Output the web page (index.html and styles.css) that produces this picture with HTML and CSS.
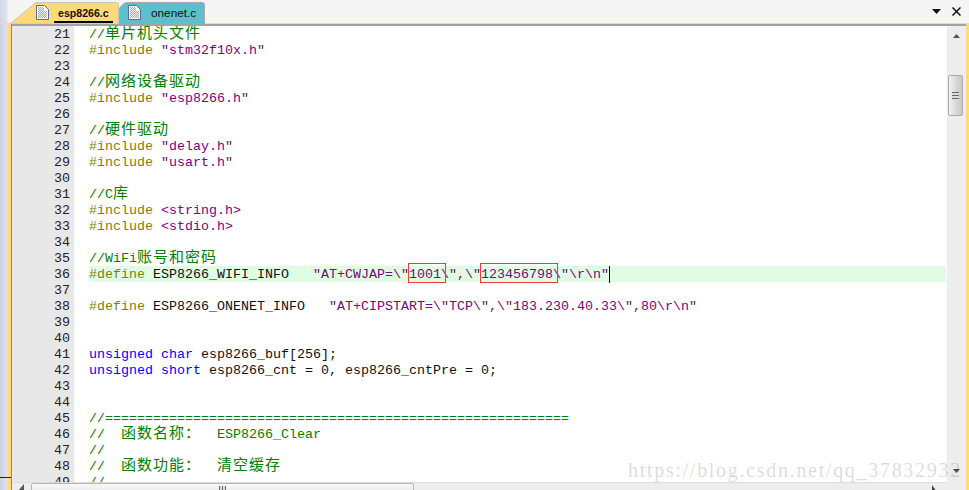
FILE: index.html
```html
<!DOCTYPE html>
<html lang="zh">
<head>
<meta charset="utf-8">
<title>esp8266.c</title>
<link rel="stylesheet" href="styles.css">
</head>
<body>
<div class="window">
  <div class="tabbar">
    <svg class="tabshapes" width="969" height="24" viewBox="0 0 969 24">
      <path d="M118.500 24 L118.500 4.500 Q118.500 2.500 116 2.500 L36 2.500 L10 24 Z" fill="#ffd97a" stroke="#c4c4c4"/>
      <path d="M119.500 24 L119.500 9 Q119.500 7 124 3.500 Q125 2.500 128 2.500 L202 2.500 Q204.500 2.500 204.500 5 L204.500 24 Z" fill="#5cc0cc" stroke="#a8a8a8"/>
    </svg>
    <div class="tab tab-active">
      <svg class="fileicon" width="13" height="15" viewBox="0 0 13 15"><defs><pattern id="dither" width="2" height="2" patternUnits="userSpaceOnUse"><rect width="2" height="2" fill="#f0f0f0"/><rect width="1" height="1" fill="#a8a8a8"/><rect x="1" y="1" width="1" height="1" fill="#a8a8a8"/></pattern></defs><path d="M.5.500H8.500L12.500 4.500V14.500H.5Z" fill="#fff" stroke="#4f6f9c"/><path d="M2 2H8V6H11V13H2Z" fill="url(#dither)"/></svg>
      <span class="tablabel">esp8266.c</span>
    </div>
    <div class="tab tab-other">
      <svg class="fileicon" width="13" height="15" viewBox="0 0 13 15"><path d="M.5.500H8.500L12.500 4.500V14.500H.5Z" fill="#fff" stroke="#4f6f9c"/><path d="M2 2H8V6H11V13H2Z" fill="url(#dither)"/></svg>
      <span class="tablabel">onenet.c</span>
    </div>
    <div class="tabtools">
      <svg width="9" height="5" viewBox="0 0 9 5"><path d="M0 0H9L4.500 5Z" fill="#111"/></svg>
      <svg width="9" height="9" viewBox="0 0 9 9"><path d="M.5.500L8.500 8.500M8.500.500L.5 8.500" stroke="#111" stroke-width="1.500"/></svg>
    </div>
  </div>
  <div class="body">
    <div class="leftstrip"></div>
    <div class="editor">
      <div class="viewport">
        <div class="gutter">
          <span>21</span><span>22</span><span>23</span><span>24</span><span>25</span><span>26</span><span>27</span><span>28</span><span>29</span><span>30</span><span>31</span><span>32</span><span>33</span><span>34</span><span>35</span><span>36</span><span>37</span><span>38</span><span>39</span><span>40</span><span>41</span><span>42</span><span>43</span><span>44</span><span>45</span><span>46</span><span>47</span><span>48</span><span>49</span>
        </div>
        <div class="hatch"></div>
        <div class="code">
          <div class="line c">//<span class="cjk">单片机头文件</span></div>
          <div class="line"><span class="p">#include</span> <span class="s">"stm32f10x.h"</span></div>
          <div class="line"></div>
          <div class="line c">//<span class="cjk">网络设备驱动</span></div>
          <div class="line"><span class="p">#include</span> <span class="s">"esp8266.h"</span></div>
          <div class="line"></div>
          <div class="line c">//<span class="cjk">硬件驱动</span></div>
          <div class="line"><span class="p">#include</span> <span class="s">"delay.h"</span></div>
          <div class="line"><span class="p">#include</span> <span class="s">"usart.h"</span></div>
          <div class="line"></div>
          <div class="line c">//C<span class="cjk">库</span></div>
          <div class="line"><span class="p">#include</span> <span class="s">&lt;string.h&gt;</span></div>
          <div class="line"><span class="p">#include</span> <span class="s">&lt;stdio.h&gt;</span></div>
          <div class="line"></div>
          <div class="line c">//WiFi<span class="cjk">账号和密码</span></div>
          <div class="line current"><span class="p">#define</span> ESP8266_WIFI_INFO   <span class="s">"AT+CWJAP=\"1001\",\"123456798\"\r\n"</span><span class="caret"></span><span class="mark mark-ssid"></span><span class="mark mark-pass"></span></div>
          <div class="line"></div>
          <div class="line"><span class="p">#define</span> ESP8266_ONENET_INFO   <span class="s">"AT+CIPSTART=\"TCP\",\"183.230.40.33\",80\r\n"</span></div>
          <div class="line"></div>
          <div class="line"></div>
          <div class="line"><span class="k">unsigned</span> <span class="k">char</span> esp8266_buf[256];</div>
          <div class="line"><span class="k">unsigned</span> <span class="k">short</span> esp8266_cnt = 0, esp8266_cntPre = 0;</div>
          <div class="line"></div>
          <div class="line"></div>
          <div class="line c">//==========================================================</div>
          <div class="line c">//  <span class="cjk">函数名称：</span>  ESP8266_Clear</div>
          <div class="line c">//</div>
          <div class="line c">//  <span class="cjk">函数功能：</span>  <span class="cjk">清空缓存</span></div>
          <div class="line c">//</div>
        </div>
      </div>
      <div class="hscroll">
        <svg class="arrow" width="6" height="7" viewBox="0 0 6 7"><path d="M6 0V7H0Z" fill="#555"/></svg>
        <div class="hthumb"><span class="grip"></span></div>
        <svg class="arrow-right" width="5" height="7" viewBox="0 0 5 7"><path d="M0 0L5 7H0Z" fill="#444"/></svg>
      </div>
    </div>
    <div class="vscroll">
      <svg width="7" height="4" viewBox="0 0 7 4"><path d="M3.500 0L7 4H0Z" fill="#555"/></svg>
      <div class="vthumb"><span class="vgrip"></span></div>
      <svg class="downarrow" width="7" height="4" viewBox="0 0 7 4"><path d="M3.500 4L7 0H0Z" fill="#444"/></svg>
    </div>
    <div class="rightedge"></div>
  </div>
  <div class="watermark">https://blog.csdn.net/qq_37832932</div>
</div>
</body>
</html>
```
FILE: styles.css
```css
* { box-sizing: border-box; }
html, body { margin: 0; padding: 0; }
body { width: 969px; height: 490px; overflow: hidden; background: #fff; }
.window { position: relative; width: 969px; height: 490px; display: flex; flex-direction: column; overflow: hidden; }

.tabbar { position: relative; height: 24px; flex: none; background: linear-gradient(to right, #d3d7e6 0, #dfe3ee 7px, #f5f5f5 8px); display: flex; align-items: stretch; padding-left: 36px; border-bottom: 1px solid #ffd97a; }
.tabshapes { position: absolute; left: 0; top: 0; }
.tab { position: relative; display: flex; align-items: center; color: #111; padding-top: 2px; }
.tab-active { width: 83px; }
.tab-other { width: 85px; padding-left: 9px; }
.fileicon { flex: none; }
.tablabel { font-family: "Liberation Sans", Arial, sans-serif; }
.tab-active .tablabel { font-size: 10.6px; font-weight: 700; line-height: 16px; margin-left: 5px; padding: 1px 4px 0; border-bottom: 2px solid #000; margin-top: 1px; }
.tab-other .tablabel { font-size: 11.8px; line-height: 20px; margin-left: 10px; }
.tabtools { position: relative; margin-left: auto; display: flex; align-items: center; gap: 11px; padding-right: 8px; }

.body { flex: 1; min-height: 0; display: flex; }
.leftstrip { width: 11px; flex: none; background: linear-gradient(to bottom, transparent 453px, #222 453px, #222 454px, transparent 454px), linear-gradient(to right, #c9cfe0 0, #dfe3ee 7px, #ffd97a 8px, #ffd97a 11px); }
.editor { width: 936px; flex: none; display: flex; flex-direction: column; border-top: 2px solid #a3a3a3; border-left: 1px solid #888; min-height: 0; }
.viewport { flex: 1; min-height: 0; display: flex; overflow: hidden; background: #fff; }
.gutter { width: 62px; flex: none; background: #e8e8e8; display: flex; flex-direction: column; align-items: flex-end; padding-right: 4px; font: 13.33px/16px "Liberation Mono", monospace; color: #222; }
.gutter span { display: block; height: 16px; flex: none; padding-top: 1px; }
.hatch { width: 15px; flex: none; background-color: #fff; background-image: radial-gradient(#e2e2e2 0.6px, transparent 0.7px); background-size: 2px 2px; }
.code { flex: 1; min-width: 0; font: 13.33px/16px "Liberation Mono", "Courier New", monospace; color: #111; }
.line { position: relative; height: 16px; padding-top: 1px; white-space: pre; }
.cjk { font-family: "Noto Sans CJK SC", sans-serif; font-size: 15px; letter-spacing: 1px; line-height: 0; }
.c { color: #008000; }
.p { color: #808000; }
.s { color: #800080; }
.k { color: #0000ff; }
.current { background: #e0fde4; margin-right: 1px; }
.caret { display: inline-block; width: 1px; height: 17px; margin-top: -1px; background: #000; vertical-align: top; }
.mark { position: absolute; top: -3px; height: 20px; border: 1px solid #f03a3a; }
.mark-ssid { left: 319px; width: 38px; }
.mark-pass { left: 391px; width: 78px; }

.hscroll { height: 8px; flex: none; background: #ededed; display: flex; align-items: flex-start; overflow: hidden; border-top: 1px solid #ddd; }
.hscroll .arrow { margin: 1px 0 0 6px; flex: none; }
.hthumb { margin-left: 7px; width: 383px; height: 12px; flex: none; background: linear-gradient(#fafafa, #e4e4e4); border: 1px solid #b5b5b5; border-radius: 2px; display: flex; justify-content: center; padding-top: 2px; }
.grip { width: 7px; height: 6px; background: repeating-linear-gradient(to right, #666 0 1px, #ddd 1px 3px); }
.arrow-right { margin: 2px 0 0 518px; flex: none; }

.vscroll { width: 19px; flex: none; background: #ededed; border-top: 2px solid #a3a3a3; display: flex; flex-direction: column; align-items: center; padding-top: 8px; }
.vthumb { margin-top: 37px; margin-right: 2px; width: 15px; height: 41px; background: linear-gradient(to right, #f2f2f2, #d6d6d6 60%, #c8c8c8); border: 1px solid #aaa; border-radius: 2px; display: flex; align-items: center; justify-content: center; }
.vgrip { width: 7px; height: 8px; background: repeating-linear-gradient(to bottom, #666 0 1px, #ddd 1px 3px); }
.downarrow { margin-top: auto; margin-bottom: 17px; }
.rightedge { width: 3px; flex: none; background: #ffd97a; }

.watermark { position: absolute; left: 628px; top: 458px; font: 20px/24px "Liberation Serif", serif; letter-spacing: 1.7px; color: rgba(130,130,120,0.28); white-space: nowrap; }
```
